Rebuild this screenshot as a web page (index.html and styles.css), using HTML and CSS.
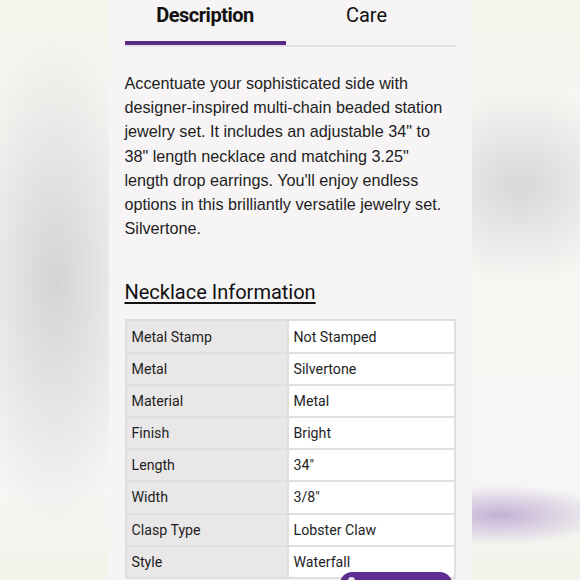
FILE: index.html
```html
<!DOCTYPE html>
<html lang="en">
<head>
  <meta charset="UTF-8" />
  <meta name="viewport" content="width=device-width, initial-scale=1.0"/>
  <title>Jewelry Set - Description</title>
  <link rel="stylesheet" href="styles.css">
</head>
<body>
  <div class="page">
    <div class="tabs">
      <div class="tab active">Description</div>
      <div class="tab">Care</div>
    </div>

    <p class="desc">Accentuate your sophisticated side with designer-inspired multi-chain beaded station jewelry set. It includes an adjustable 34" to 38" length necklace and matching 3.25" length drop earrings. You'll enjoy endless options in this brilliantly versatile jewelry set. Silvertone.</p>

    <h2 class="info-title">Necklace Information</h2>

    <table class="info">
      <tr><td>Metal Stamp</td><td>Not Stamped</td></tr>
      <tr><td>Metal</td><td>Silvertone</td></tr>
      <tr><td>Material</td><td>Metal</td></tr>
      <tr><td>Finish</td><td>Bright</td></tr>
      <tr><td>Length</td><td>34"</td></tr>
      <tr><td>Width</td><td>3/8"</td></tr>
      <tr><td>Clasp Type</td><td>Lobster Claw</td></tr>
      <tr><td>Style</td><td>Waterfall</td></tr>
    </table>

    <div class="chat-btn"><span class="chat-dot"></span></div>
  </div>
</body>
</html>
```

FILE: styles.css
```css
body {
  margin: 0;
  height: 580px;
  overflow: hidden;
  background:
    radial-gradient(ellipse 95px 250px at 55px 280px, rgba(210,210,210,0.95), rgba(210,210,210,0)),
    radial-gradient(ellipse 115px 100px at 520px 185px, rgba(214,214,214,0.95), rgba(214,214,214,0)),
    radial-gradient(ellipse 110px 30px at 500px 515px, rgba(196,176,214,1), rgba(196,176,214,0)),
    linear-gradient(#f3f6ec, #f6f6f3 20%, #f6f6f4 85%, #f1f4ea);
  font-family: 'Liberation Sans', Arial, sans-serif;
}
.page {
  position: relative;
  width: 331px;
  min-height: 580px;
  margin: 0 auto;
  padding: 0 16px;
  background: #f6f4f5;
}
.tabs {
  display: flex;
  border-bottom: 2px solid #e4e2e4;
}
.tab {
  box-sizing: border-box;
  height: 45px;
  padding-top: 3px;
  font-family: Roboto, sans-serif;
  font-size: 20px;
  line-height: 24px;
  text-align: center;
  color: #111;
  width: 162px;
}
.tab.active {
  width: 161px;
  font-weight: 700;
  letter-spacing: -0.5px;
  border-bottom: 4px solid #5a2a86;
}
.desc {
  margin: 24px 0 0;
  font-size: 16.2px;
  line-height: 24.2px;
  color: #1e1e1e;
}
.info-title {
  margin: 40px 0 0;
  font-family: Roboto, sans-serif;
  font-weight: 400;
  font-size: 20px;
  line-height: 24px;
  color: #111;
  text-decoration: underline;
  text-underline-offset: 3px;
  text-decoration-thickness: 1.5px;
}
.info {
  margin-top: 15px;
  width: 331px;
  border-collapse: collapse;
  font-family: Roboto, sans-serif;
  font-size: 14.2px;
  color: #1e1e1e;
}
.info td {
  height: 30.2px;
  padding: 0 5px;
  border: 2px solid #e0dede;
  background: #fff;
}
.info td:first-child {
  width: 150px;
  background: #e9e7e7;
}
.chat-btn {
  position: absolute;
  left: 231px;
  top: 572px;
  width: 112px;
  height: 30px;
  border-radius: 12px;
  background: #602e8f;
}
.chat-dot {
  position: absolute;
  left: 8px;
  top: 5px;
  width: 7px;
  height: 7px;
  border-radius: 50%;
  background: #e9e0f0;
}
```
